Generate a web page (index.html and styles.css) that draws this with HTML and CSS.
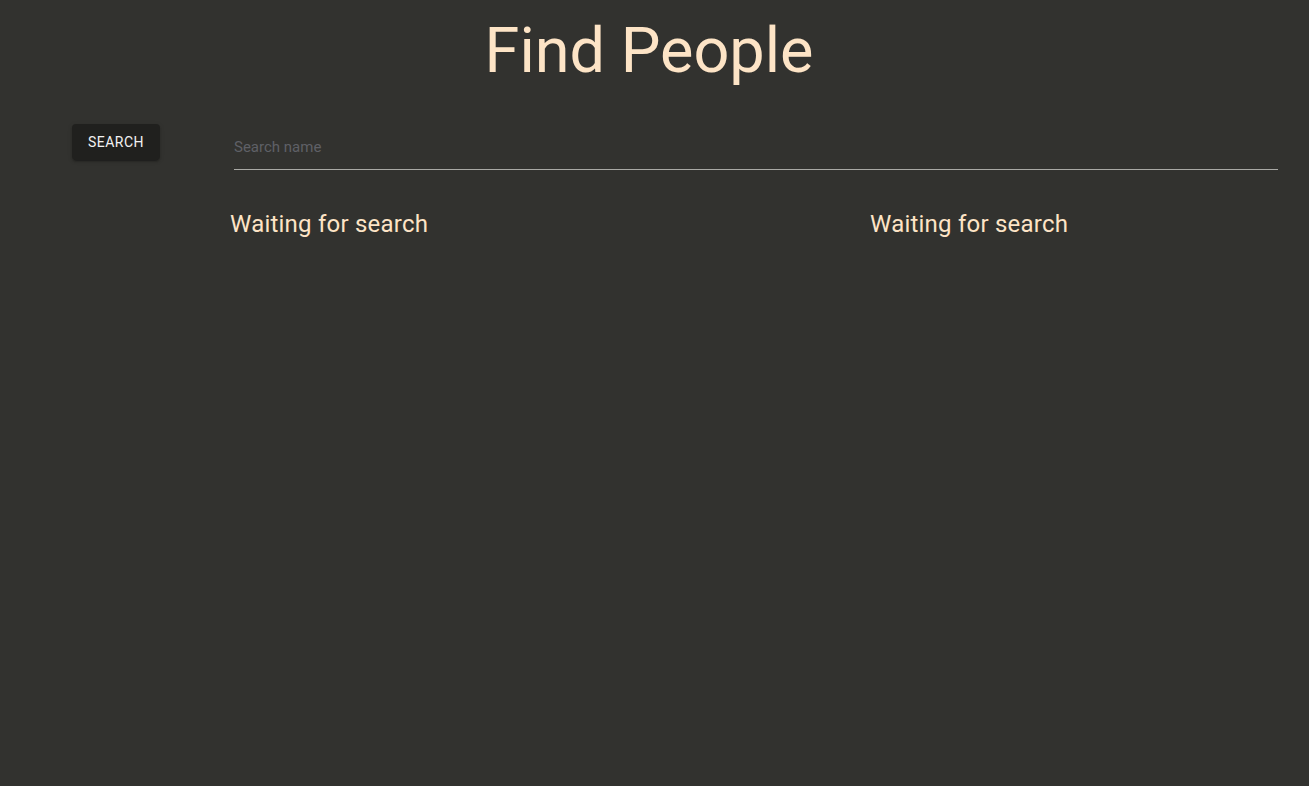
FILE: index.html
```html
<!DOCTYPE html>
<html lang="en">
<head>
<meta charset="utf-8">
<title>Find People</title>
<link rel="stylesheet" href="styles.css">
</head>
<body>
<h1 class="title">Find People</h1>
<div class="layout">
  <aside class="side">
    <button class="btn" type="button">Search</button>
  </aside>
  <main class="main">
    <div class="field">
      <input class="input" type="text" placeholder="Search name">
    </div>
    <div class="results">
      <div class="col"><h2 class="status">Waiting for search</h2></div>
      <div class="col"><h2 class="status">Waiting for search</h2></div>
    </div>
  </main>
</div>
</body>
</html>
```

FILE: styles.css
```css
html, body {
  margin: 0;
  padding: 0;
  background: #32322f;
  height: 100%;
  overflow: hidden;
}
body {
  font-family: Roboto, "Liberation Sans", sans-serif;
  color: #fde4c6;
}
.title {
  margin: 0;
  padding-top: 15px;
  padding-right: 11px;
  text-align: center;
  font-weight: 400;
  font-size: 63px;
  line-height: 72px;
  color: #fde4c6;
}
.layout {
  display: flex;
  margin-top: 37px;
}
.side {
  width: 230px;
  flex: none;
  padding-left: 72px;
  box-sizing: border-box;
}
.btn {
  background: #20201e;
  color: #f2f2f2;
  border: none;
  border-radius: 4px;
  height: 36px;
  width: 88px;
  font-family: Roboto, "Liberation Sans", sans-serif;
  font-size: 14px;
  font-weight: 400;
  letter-spacing: 0.5px;
  text-transform: uppercase;
  box-shadow: 0 3px 1px -2px rgba(0,0,0,0.2), 0 2px 2px 0 rgba(0,0,0,0.14), 0 1px 5px 0 rgba(0,0,0,0.12);
  padding: 0;
}
.main {
  flex: 1;
  min-width: 0;
  overflow: hidden;
}
.field {
  margin-left: 4px;
  width: 1044px;
  border-bottom: 1px solid #a9a9a5;
  padding-top: 10px;
}
.input {
  width: 100%;
  box-sizing: border-box;
  background: transparent;
  border: none;
  outline: none;
  font-family: Roboto, "Liberation Sans", sans-serif;
  font-size: 15px;
  padding: 4px 0 13px;
  color: #ddd;
}
.input::placeholder {
  color: #5f6066;
}
.results {
  display: grid;
  grid-template-columns: 640px 640px;
  margin-top: 38px;
}
.status {
  margin: 0;
  font-weight: 400;
  font-size: 24px;
  letter-spacing: 0.22px;
  line-height: 32px;
  color: #fde4c6;
}
```
